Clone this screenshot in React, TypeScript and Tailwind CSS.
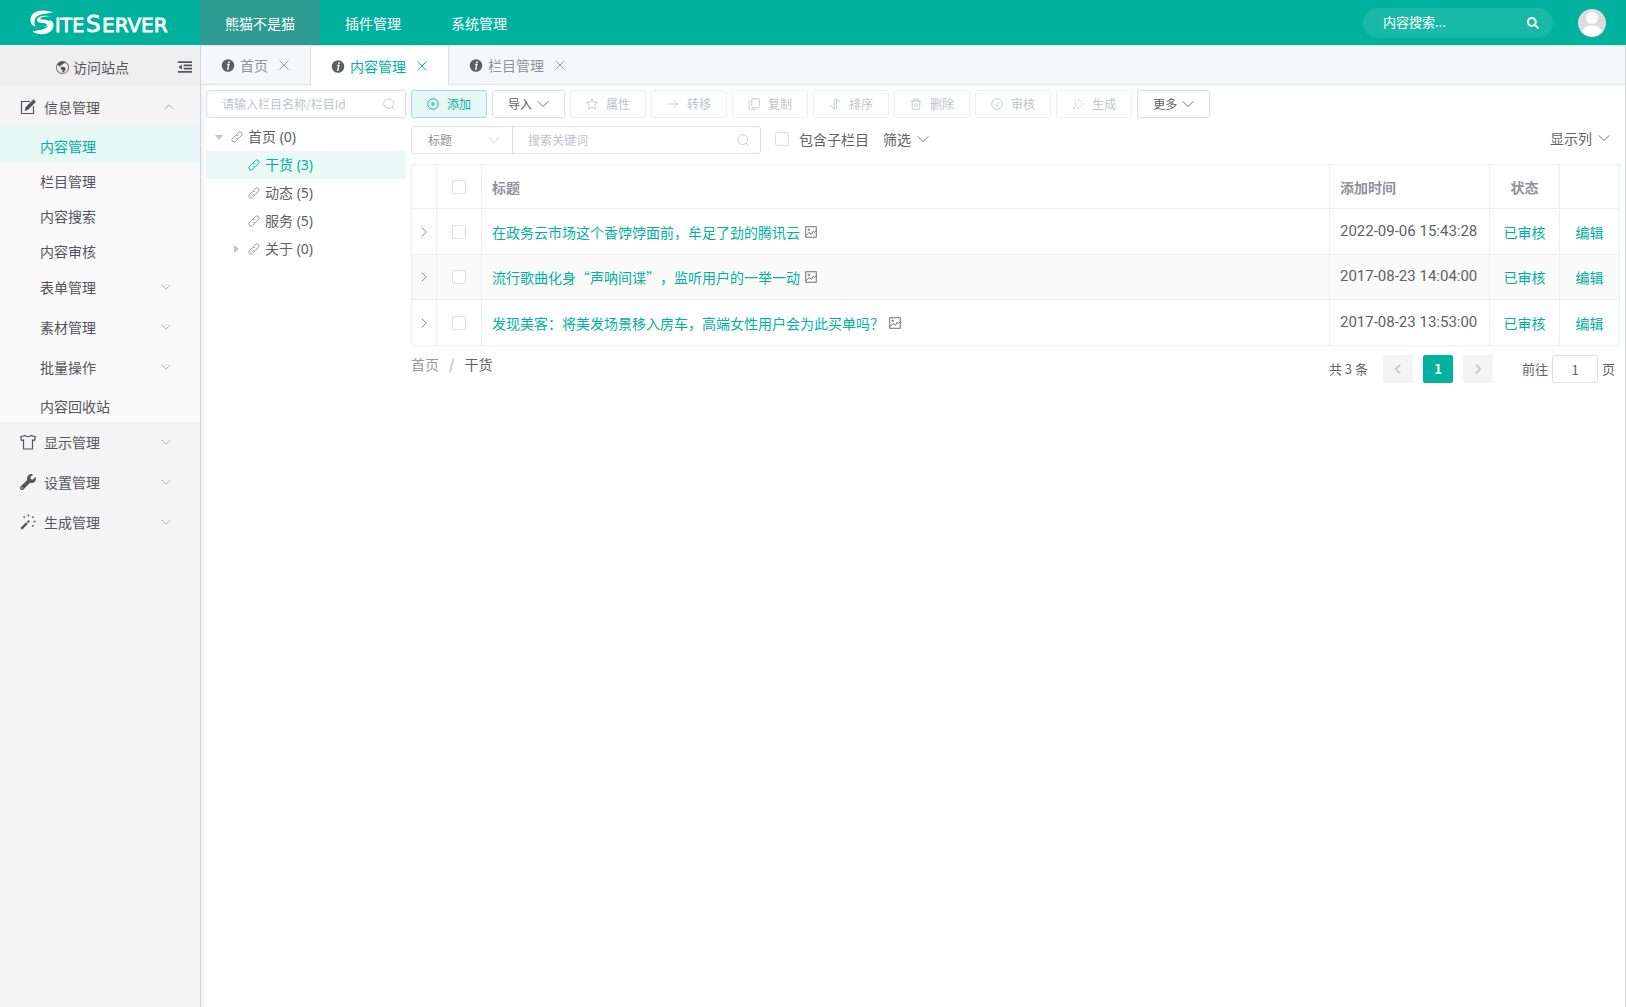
import React, { useState } from 'react';
import { FaSearch, FaWrench } from 'react-icons/fa';
import { BsGlobeAmericas } from 'react-icons/bs';

type IconName =
  | 'plus' | 'star' | 'right' | 'copy' | 'sort' | 'trash' | 'check' | 'spark'
  | 'down' | 'up' | 'next' | 'prev' | 'close' | 'search' | 'link' | 'picture'
  | 'edit' | 'shirt' | 'wand' | 'outdent';

const shapes: Record<IconName, React.ReactNode> = {
  plus: <><circle cx="8" cy="8" r="7" /><path d="M8 5v6M5 8h6" /></>,
  star: <path d="M8 1l2.200 4.600 5 .7-3.600 3.500.8 5L8 12.400l-4.400 2.400.8-5L.8 6.300l5-.7z" />,
  right: <path d="M2 8h12M9 3l5 5-5 5" />,
  copy: <><rect x="5" y="1" width="10" height="12" rx="1.5" /><path d="M3 4H1.500v9.500a1.500 1.500 0 0 0 1.500 1.500H10" /></>,
  sort: <path d="M7 1v14L1.500 9.500M10 15V1l5 5.500" />,
  trash: <path d="M1 4h14M5 4V1.500h6V4M3 4v11h10V4M6.500 7v5M9.500 7v5" />,
  check: <><circle cx="8" cy="8" r="7" /><path d="M4.500 8l2.700 2.700 4.600-5" /></>,
  spark: <path d="M9 1v3M13.500 3l-2 2M15.500 8h-3M13.500 13l-2-2M9 15v-3M1 15l5-5M2.500 8h3M4.500 3l2 2" />,
  down: <path d="M1 4.500l7 7 7-7" />,
  up: <path d="M1 11.500l7-7 7 7" />,
  next: <path d="M4.500 1l7 7-7 7" />,
  prev: <path d="M11.500 1l-7 7 7 7" />,
  close: <path d="M2 2l12 12M14 2L2 14" />,
  search: <><circle cx="7.500" cy="7.500" r="6.500" /><path d="M12 12l3 3" /></>,
  link: <path d="M7 5l3-3a2.830 2.830 0 0 1 4 4L10.500 9.500a2.830 2.830 0 0 1-4 0M9 11l-3 3a2.830 2.830 0 0 1-4-4L5.500 6.500a2.830 2.830 0 0 1 4 0" />,
  picture: <><rect x="1" y="1" width="14" height="14" /><path d="M1.500 13l4-4.500 3 2.500 2.500-4 1.500 1.500L15 6" /><circle cx="5" cy="5" r="1" /></>,
  edit: <><path d="M10 2.500H1.500v12h12V7" /><path d="M5.500 11l.6-2.500L13.500 1l1.700 1.700-7.400 7.500z" fill="currentColor" /></>,
  shirt: <path d="M5 1.500C6 3 10 3 11 1.500L15.300 3l-.8 3.500-2-.5v9h-9V6l-2 .5L.7 3z" />,
  wand: (
    <>
      <path d="M1.200 14.800L7 9" strokeWidth="2.400" />
      <path d="M7.600 8.400l1.800-1.800" strokeWidth="1.800" />
      <path d="M8.500.5v2M3.500 2.500l1.300 1.300M13.500 2.500l-1.300 1.300M13.500 7.500h2M12.200 11.200l1.300 1.300" strokeWidth="1.400" />
    </>
  ),
  outdent: (
    <>
      <path d="M0 2.500h16M6.500 6.200H16M6.500 9.800H16M0 13.500h16" strokeWidth="2" />
      <path d="M4.500 5v6L.5 8z" fill="currentColor" stroke="none" />
    </>
  ),
};

function Icon({ name, className, weight = 1.2 }: { name: IconName; className?: string; weight?: number }) {
  return (
    <svg viewBox="0 0 16 16" fill="none" stroke="currentColor" strokeWidth={weight} className={className} aria-hidden="true">
      {shapes[name]}
    </svg>
  );
}

function InfoIcon() {
  return (
    <svg viewBox="0 0 14 14" className="size-[14px]" aria-hidden="true">
      <circle cx="7" cy="7.500" r="6.300" fill="#5f6066" />
      <path d="M6 6.300h1.900L6.700 11h1" fill="none" stroke="#fff" strokeWidth="1.300" />
      <circle cx="8" cy="4.200" r=".9" fill="#fff" />
    </svg>
  );
}

function Logo() {
  return (
    <svg viewBox="0 0 144 26" className="h-[26px] w-[144px]" fill="#fff" role="img" aria-label="SiteServer">
      <path d="M23 2.500C14-1.500 0 0 .5 10.500c0 3.500 2 5 5 6C3 11 5 6 11 4.500c4-.9 8-1.200 12-2z" />
      <path d="M2.500 21.500c6 4.500 20 4 21-6C23.800 12.500 22 10.500 19 10c1.500 4-1 8-6.500 9.500-4 1-7.500 1.200-10 2z" />
      <path d="M22 6.200C16 5 7.500 5.500 7 9.500c-.3 3 3 3.500 7.500 3.700 3 .2 3.500 2.300-.5 4.300 6-1 8-7.300 1-7.700-4-.2-5-.3-4.500-1.500C11 6.800 17 6 22 6.200z" />
      <g fontFamily="'DejaVu Sans', sans-serif" stroke="#fff" strokeWidth="0.800">
        <text x="25" y="22" fontSize="19">ITE</text>
        <text x="56" y="22" fontSize="23">S</text>
        <text x="72" y="22" fontSize="20">ERVER</text>
      </g>
    </svg>
  );
}

const topNav = ['熊猫不是猫', '插件管理', '系统管理'];

const subMenu = [
  { label: '内容管理' },
  { label: '栏目管理' },
  { label: '内容搜索' },
  { label: '内容审核' },
  { label: '表单管理', nested: true },
  { label: '素材管理', nested: true },
  { label: '批量操作', nested: true },
  { label: '内容回收站' },
];

const groups = [
  { label: '显示管理', icon: <Icon name="shirt" className="size-4" /> },
  { label: '设置管理', icon: <FaWrench className="size-4" /> },
  { label: '生成管理', icon: <Icon name="wand" className="size-4" /> },
];

const tabs = ['首页', '内容管理', '栏目管理'];

const channels = [
  { name: '干货', count: 3 },
  { name: '动态', count: 5 },
  { name: '服务', count: 5 },
  { name: '关于', count: 0, nested: true },
];

const actions: { label: string; icon: IconName }[] = [
  { label: '属性', icon: 'star' },
  { label: '转移', icon: 'right' },
  { label: '复制', icon: 'copy' },
  { label: '排序', icon: 'sort' },
  { label: '删除', icon: 'trash' },
  { label: '审核', icon: 'check' },
  { label: '生成', icon: 'spark' },
];

const rows = [
  { title: '在政务云市场这个香饽饽面前，牟足了劲的腾讯云', date: '2022-09-06 15:43:28' },
  { title: '流行歌曲化身“声呐间谍”，监听用户的一举一动', date: '2017-08-23 14:04:00' },
  { title: '发现美客：将美发场景移入房车，高端女性用户会为此买单吗？', date: '2017-08-23 13:53:00' },
];

const checkbox = 'block size-[14px] appearance-none rounded-xs border border-[#dcdfe6] bg-white checked:bg-[#00b19d]';
const button = 'flex h-7 items-center rounded-[3px] border px-[15px] text-xs';

function Header() {
  return (
    <header className="flex h-[45px] items-center bg-[#00b19d] text-sm text-white">
      <a href="#" className="flex w-[200px] pl-[30px]">
        <Logo />
      </a>
      <nav className="flex h-full">
        {topNav.map((item, i) => (
          <a key={item} href="#" className={`flex items-center px-[25px] ${i === 0 ? 'bg-[#2e9c91]' : ''}`}>
            {item}
          </a>
        ))}
      </nav>
      <form className="ml-auto flex h-[30px] w-[190px] items-center rounded-full bg-white/10 pr-3.5 pl-5">
        <input
          aria-label="内容搜索"
          placeholder="内容搜索..."
          className="min-w-0 flex-1 text-[13px] outline-none placeholder:text-white"
        />
        <button type="button" aria-label="搜索">
          <FaSearch className="size-3" />
        </button>
      </form>
      <a href="#" aria-label="用户" className="mr-5 ml-[25px]">
        <svg viewBox="0 0 28 28" className="size-7">
          <circle cx="14" cy="14" r="14" fill="#dcdcdc" />
          <circle cx="14" cy="9" r="6" fill="#fff" />
          <path d="M3.500 22.700C6 18.500 10 16.500 14 16.500s8 2 10.500 6.200A14 14 0 0 1 3.500 22.700z" fill="#fff" />
        </svg>
      </a>
    </header>
  );
}

function Sidebar() {
  return (
    <aside className="w-[200px] shrink-0 bg-[#f4f4f4] text-sm text-[#54555c]">
      <div className="flex h-[42px] items-center bg-[#eee] pt-0.5 pr-2 pl-14">
        <a href="#" className="flex items-center gap-1">
          <BsGlobeAmericas className="size-[13px]" />
          访问站点
        </a>
        <button aria-label="收起菜单" className="ml-auto">
          <Icon name="outdent" className="size-[14px]" />
        </button>
      </div>
      <button className="flex h-10 w-full items-center pr-[26px] pl-5">
        <Icon name="edit" className="mr-2 size-4" />
        信息管理
        <Icon name="up" className="ml-auto size-[10px] text-[#909399]" />
      </button>
      <ul className="bg-[#f9f9f9]">
        {subMenu.map((item, i) => (
          <li key={item.label}>
            <a
              href="#"
              className={`flex items-center justify-between pr-[29px] pl-10 ${item.nested ? 'h-10' : 'h-[35px] pt-0.5'} ${
                i === 0 ? 'bg-[#e6f7f5] text-[#00b19d]' : ''
              }`}
            >
              {item.label}
              {item.nested && <Icon name="down" className="size-[10px] text-[#909399]" />}
            </a>
          </li>
        ))}
      </ul>
      {groups.map((group) => (
        <button key={group.label} className="flex h-10 w-full items-center pr-[29px] pl-5">
          <span className="mr-2">{group.icon}</span>
          {group.label}
          <Icon name="down" className="ml-auto size-[10px] text-[#909399]" />
        </button>
      ))}
    </aside>
  );
}

function Tabs() {
  const [active, setActive] = useState('内容管理');
  return (
    <div className="flex h-10 border-t border-[#dcdfe6] bg-[#f5f7fa] text-sm">
      {tabs.map((tab) => (
        <div
          key={tab}
          className={`flex items-center border-[#dcdfe6] px-5 ${
            tab === active ? 'border-r bg-white text-[#00b19d]' : 'border-b text-[#909399] first:border-r'
          }`}
        >
          <button onClick={() => setActive(tab)} className="flex items-center gap-[5px]">
            <InfoIcon />
            {tab}
          </button>
          <button aria-label={`关闭${tab}`} className="ml-2.5">
            <Icon name="close" className="size-3" />
          </button>
        </div>
      ))}
      <div className="flex-1 border-b border-[#dcdfe6]" />
    </div>
  );
}

function ChannelTree() {
  return (
    <div className="w-[200px] shrink-0">
      <label className="flex h-7 items-center rounded-[3px] border border-[#dcdfe6] pr-2.5 pl-[15px] text-xs text-[#c0c4cc]">
        <input
          aria-label="栏目名称"
          placeholder="请输入栏目名称/栏目Id"
          className="min-w-0 flex-1 outline-none placeholder:text-[#c0c4cc]"
        />
        <Icon name="search" className="size-3" />
      </label>
      <ul className="mt-[5px] font-['Noto_Sans','Noto_Sans_CJK_SC',sans-serif] text-sm text-[#606266]">
        <li className="flex h-7 items-center pl-[9px]">
          <svg viewBox="0 0 8 8" className="mr-2 size-2 fill-[#c0c4cc]"><path d="M0 2h8L4 7z" /></svg>
          <Icon name="link" className="mr-[5px] size-3 text-[#909399]" />
          首页 (0)
        </li>
        {channels.map((c, i) => (
          <li key={c.name} className={`flex h-7 items-center pl-[26px] ${i === 0 ? 'bg-[#eaf9f6] text-[#00b19d]' : ''}`}>
            <svg viewBox="0 0 8 8" className="mr-2 size-2 fill-[#c0c4cc]">{c.nested && <path d="M2 0v8l5-4z" />}</svg>
            <Icon name="link" className={`mr-[5px] size-3 ${i === 0 ? '' : 'text-[#909399]'}`} />
            {c.name} ({c.count})
          </li>
        ))}
      </ul>
    </div>
  );
}

function Toolbar() {
  return (
    <div className="flex gap-[5px]">
      <button className={`${button} gap-2 border-[#99e0d8] bg-[#e6f7f5] text-[#00b19d]`}>
        <Icon name="plus" className="size-3" />
        添加
      </button>
      <button className={`${button} gap-[5px] border-[#dcdfe6] text-[#606266]`}>
        导入
        <Icon name="down" className="size-3" />
      </button>
      {actions.map((action) => (
        <button key={action.label} disabled className={`${button} gap-2 border-[#ebeef5] text-[#c0c4cc]`}>
          <Icon name={action.icon} className="size-3" />
          {action.label}
        </button>
      ))}
      <button className={`${button} gap-[5px] border-[#dcdfe6] text-[#606266]`}>
        更多
        <Icon name="down" className="size-3" />
      </button>
    </div>
  );
}

function Filters() {
  return (
    <div className="mt-2 flex h-7 items-start text-sm text-[#606266]">
      <div className="flex h-full w-[350px] rounded-[3px] border border-[#dcdfe6] text-xs text-[#909399]">
        <label className="flex w-[101px] items-center border-r border-[#dcdfe6] pr-3 pl-4">
          <select aria-label="搜索字段" className="min-w-0 flex-1 appearance-none outline-none">
            <option>标题</option>
          </select>
          <Icon name="down" className="size-3 text-[#c0c4cc]" />
        </label>
        <label className="flex flex-1 items-center pr-[11px] pl-[15px]">
          <input aria-label="关键词" placeholder="搜索关键词" className="min-w-0 flex-1 outline-none placeholder:text-[#c0c4cc]" />
          <Icon name="search" className="size-3 text-[#c0c4cc]" />
        </label>
      </div>
      <label className="ml-3.5 flex h-[26px] items-center gap-2.5">
        <input type="checkbox" className={checkbox} />
        包含子栏目
      </label>
      <button className="ml-3.5 flex h-[26px] items-center gap-1.5">
        筛选
        <Icon name="down" className="size-3" />
      </button>
      <button className="mr-2.5 ml-auto flex h-6 items-center gap-1.5">
        显示列
        <Icon name="down" className="size-3" />
      </button>
    </div>
  );
}

function ContentTable() {
  return (
    <table className="mt-2.5 w-full table-fixed border-collapse text-left text-sm text-[#606266] [&_td]:border [&_td]:border-[#ebeef5] [&_th]:border [&_th]:border-[#ebeef5]">
      <colgroup>
        <col className="w-[25px]" />
        <col className="w-[45px]" />
        <col />
        <col className="w-[160px]" />
        <col className="w-[70px]" />
        <col className="w-[60px]" />
      </colgroup>
      <thead className="text-[#909399]">
        <tr className="h-11">
          <th />
          <th>
            <input type="checkbox" aria-label="全选" className={`${checkbox} mx-auto`} />
          </th>
          <th className="px-2.5">标题</th>
          <th className="px-2.5">添加时间</th>
          <th className="text-center">状态</th>
          <th />
        </tr>
      </thead>
      <tbody>
        {rows.map((row) => (
          <tr key={row.date} className="h-[46px] even:h-[45px] even:bg-[#fafafa]">
            <td>
              <button aria-label="展开" className="mx-auto block">
                <Icon name="next" className="size-[10px]" />
              </button>
            </td>
            <td>
              <input type="checkbox" aria-label={row.title} className={`${checkbox} mx-auto`} />
            </td>
            <td className="px-2.5">
              <div className="flex items-center gap-[5px]">
                <a href="#" className="text-[#00b19d] [text-spacing-trim:space-all]">{row.title}</a>
                <Icon name="picture" className="size-3" />
              </div>
            </td>
            <td className="px-2.5 font-['Roboto',sans-serif] text-[15px]">{row.date}</td>
            <td className="text-center">
              <a href="#" className="text-[#00b19d]">已审核</a>
            </td>
            <td className="text-center">
              <a href="#" className="text-[#00b19d]">编辑</a>
            </td>
          </tr>
        ))}
      </tbody>
    </table>
  );
}

function Footer() {
  return (
    <div className="mt-2 flex items-start justify-between text-sm text-[#606266]">
      <nav className="flex items-center gap-2.5 text-[#999]">
        <a href="#">首页</a>
        <span className="font-bold text-[#c0c4cc]">/</span>
        <span className="text-[#606266]">干货</span>
      </nav>
      <div className="mt-px mr-[5px] flex items-center text-[13px]">
        <span className="mr-[15px]">共 3 条</span>
        <div className="flex gap-2.5">
          <button aria-label="上一页" disabled className="flex h-7 w-[30px] items-center justify-center rounded-xs bg-[#f4f4f5] text-[#c0c4cc]">
            <Icon name="prev" weight={2.5} className="size-[10px]" />
          </button>
          <button className="h-7 w-[30px] rounded-xs bg-[#00b19d] font-bold text-white">1</button>
          <button aria-label="下一页" disabled className="flex h-7 w-[30px] items-center justify-center rounded-xs bg-[#f4f4f5] text-[#c0c4cc]">
            <Icon name="next" weight={2.5} className="size-[10px]" />
          </button>
        </div>
        <label className="ml-[29px] flex items-center gap-1">
          前往
          <input defaultValue="1" className="h-7 w-[46px] rounded-[3px] border border-[#dcdfe6] text-center outline-none" />
          页
        </label>
      </div>
    </div>
  );
}

export default function App() {
  return (
    <div className="flex min-h-screen flex-col bg-white font-['Noto_Sans_CJK_SC',sans-serif]">
      <Header />
      <div className="flex flex-1">
        <Sidebar />
        <main className="min-w-0 flex-1 border-x border-[#d3d4dc] shadow-[inset_10px_0_10px_-8px_rgba(0,0,0,0.08)]">
          <Tabs />
          <div className="flex gap-[5px] p-[5px]">
            <ChannelTree />
            <div className="min-w-0 flex-1">
              <Toolbar />
              <Filters />
              <ContentTable />
              <Footer />
            </div>
          </div>
        </main>
      </div>
    </div>
  );
}
